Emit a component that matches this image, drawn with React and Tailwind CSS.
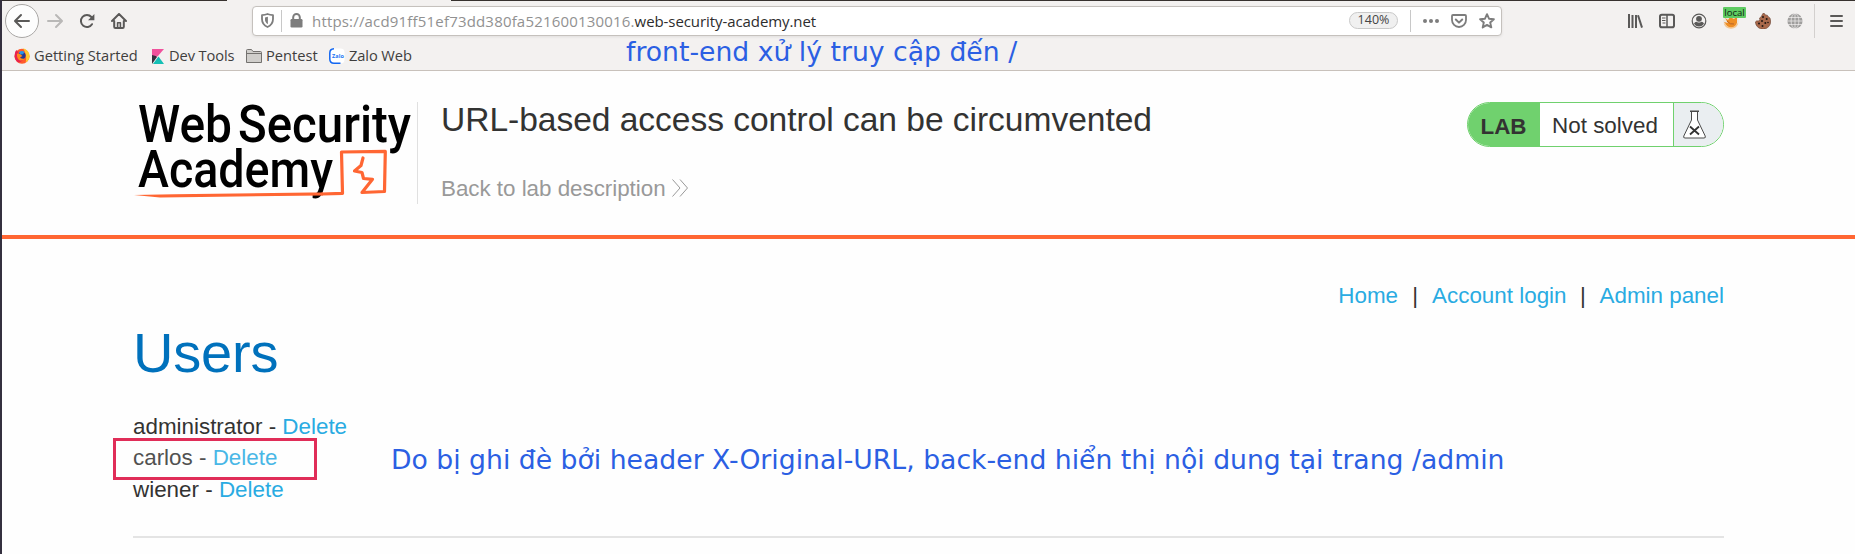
import React from "react";

const ui = "font-['Open_Sans',sans-serif] whitespace-nowrap";

function Toolbar() {
  return (
    <div className="flex h-[42px] items-center">
      <div className="ml-[3px] flex size-[34px] shrink-0 items-center justify-center rounded-full border border-[#a9a7a5] bg-[#fdfdfd]">
        <svg width="18" height="18" viewBox="0 0 18 18" fill="none" stroke="#5a5958" strokeWidth="2" strokeLinecap="round" strokeLinejoin="round">
          <path d="M16 9H2.5M8 3L2 9l6 6" />
        </svg>
      </div>
      <svg className="ml-[7px] shrink-0" width="18" height="18" viewBox="0 0 18 18" fill="none" stroke="#b9b8b7" strokeWidth="2" strokeLinecap="round" strokeLinejoin="round">
        <path d="M2 9h13.5M10 3l6 6-6 6" />
      </svg>
      <svg className="ml-[15px] shrink-0" width="16" height="16" viewBox="0 0 16 16" fill="none" stroke="#5a5958" strokeWidth="2">
        <path d="M13 11.2A6 6 0 1 1 12.4 4" strokeLinecap="round" />
        <path d="M15.4 1v6.3H9z" fill="#5a5958" stroke="none" />
      </svg>
      <svg className="ml-[16px] shrink-0" width="16" height="16" viewBox="0 0 16 16" fill="none" stroke="#5a5958" strokeWidth="2" strokeLinecap="round" strokeLinejoin="round">
        <path d="M1 8l7-7 7 7M3.2 8v5.8q0 1.200 1.200 1.200h7.200q1.200 0 1.200-1.200V8" />
        <path d="M6.600 14.500V9.800h2.800v4.700" strokeWidth="1.600" />
      </svg>
      <div className="mt-[-1px] ml-[125px] flex h-[30px] w-[1250px] shrink-0 items-center rounded-[4px] border border-[#c5c1bd] bg-white shadow-[0_1px_3px_rgba(0,0,0,0.08)]">
        <svg className="ml-[8px] shrink-0" width="13" height="15" viewBox="0 0 13 15" fill="none" stroke="#7d7d7d" strokeWidth="1.8">
          <path d="M1 2.2Q4 2 6.5 1 9 2 12 2.2V6c0 4-2 6.500-5.500 8C3 12.500 1 10 1 6z" strokeLinejoin="round" />
          <path d="M6.900 3.800v7.400C4.800 9.800 4 8.500 4 6.500V4.500z" fill="#7d7d7d" stroke="none" />
        </svg>
        <div className="ml-[7px] h-[22px] w-px bg-[#c8c8c8]" />
        <svg className="ml-[8px] shrink-0" width="13" height="15" viewBox="0 0 13 15">
          <path d="M3.200 7V4.300a3.300 3.300 0 0 1 6.600 0V7" fill="none" stroke="#7d7d7d" strokeWidth="2" />
          <rect x="0.500" y="6" width="12" height="8.500" rx="1.200" fill="#7d7d7d" />
        </svg>
        <div className={`${ui} ml-[9px] w-[1037px] text-[15px] leading-[20px] text-[#919191]`}>
          <span className="tracking-[0.18px]">https://acd91ff51ef73dd380fa521600130016.</span>
          <span className="tracking-[-0.08px] text-[#2d2d2d]">web-security-academy.net</span>
        </div>
        <div className={`${ui} flex h-[17px] w-[49px] shrink-0 items-center justify-center rounded-full border border-[#c9c9c9] bg-[#f0f0f0] text-[12.500px] text-[#444]`}>140%</div>
        <div className="ml-[12px] h-[22px] w-px bg-[#c8c8c8]" />
        <svg className="ml-[12px] shrink-0" width="16" height="4" viewBox="0 0 16 4" fill="#7d7d7d">
          <circle cx="2" cy="2" r="2" />
          <circle cx="8" cy="2" r="2" />
          <circle cx="14" cy="2" r="2" />
        </svg>
        <svg className="ml-[12px] shrink-0" width="16" height="16" viewBox="0 0 16 16" fill="none" stroke="#7d7d7d" strokeWidth="2" strokeLinecap="round" strokeLinejoin="round">
          <path d="M2 2h12q1 0 1 1v4a7 7 0 0 1-14 0V3q0-1 1-1z" strokeWidth="1.800" />
          <path d="M4.800 6.500L8 9.600l3.200-3.100" />
        </svg>
        <svg className="ml-[12px] shrink-0" width="16" height="16" viewBox="0 0 16 16" fill="none" stroke="#7d7d7d" strokeWidth="1.900" strokeLinejoin="round">
          <path d="M8 1.200l2 4.500 4.900.500-3.700 3.300 1.100 4.900L8 11.900l-4.300 2.500 1.100-4.900L1.100 6.200 6 5.700z" />
        </svg>
      </div>
      <div className="ml-[125px] flex items-center gap-[16px]">
        <svg width="16" height="16" viewBox="0 0 16 16" stroke="#5a5958" strokeWidth="2">
          <path d="M2 1v14M5.500 2v13M9 2v13" />
          <path d="M11 2.200L15 14.600" />
        </svg>
        <svg width="16" height="16" viewBox="0 0 16 16" fill="none" stroke="#5a5958">
          <rect x="1" y="1.800" width="14" height="12.400" rx="1.800" strokeWidth="2" />
          <path d="M8 2v12" strokeWidth="1.500" />
          <path d="M3 5h3.500M3 7.500h3.500M3.500 10h3" strokeWidth="1" />
        </svg>
        <svg width="16" height="16" viewBox="0 0 16 16">
          <circle cx="8" cy="8" r="6.800" fill="none" stroke="#5a5958" strokeWidth="1.200" />
          <circle cx="8" cy="5.800" r="2.900" fill="#5a5958" />
          <path d="M3 10.300Q5 8.600 6 8.900q2 1 4 0 1-.300 3 1.400A5.500 5.500 0 0 1 3 10.300z" fill="#5a5958" />
        </svg>
        <div className="relative size-[16px]">
          <svg width="16" height="16" viewBox="0 0 16 16">
            <circle cx="8" cy="8" r="7.800" fill="#eee7de" />
            <path d="M2 5l3 2 2-3 4 2 3-3v7a6 6 0 0 1-10 3L1 9l4 1z" fill="#ef8e25" />
            <path d="M4 8q3 4 7 3" stroke="#b7642a" fill="none" />
            <path d="M1.500 10.500a7 7 0 0 0 13 0" stroke="#f6c58e" fill="none" strokeWidth="1.500" />
          </svg>
          <div className={`${ui} absolute -top-[6px] left-0 flex h-[11px] w-[23px] items-center justify-center rounded-[1px] bg-[#5fcb62] text-[9.500px] leading-[11px] font-medium text-[#10240f]`}>local</div>
        </div>
        <svg width="16" height="16" viewBox="0 0 16 16">
          <path d="M8 .300l1.500.300 1 1.300 1.800.300 1.200 1.700L15 5l.700 3A7.700 7.700 0 1 1 .300 9l1.500-1.200 1.700.300 1.300-1.600-.300-1.500 1.500-1z" fill="#a9694b" stroke="#5a3526" strokeWidth=".500" />
          <g fill="#221713"><circle cx="8" cy="4" r="1" /><circle cx="11.700" cy="6" r="1" /><circle cx="7" cy="8" r="1" /><circle cx="10.300" cy="10" r="1" /><circle cx="4" cy="10.500" r="1" /><circle cx="7.500" cy="13" r="1" /><circle cx="13" cy="9.500" r=".800" /></g>
        </svg>
        <svg width="16" height="16" viewBox="0 0 16 16" fill="none" stroke="#f3f1f0" strokeWidth=".700">
          <circle cx="8" cy="8" r="7.600" fill="#9f9e9d" stroke="none" />
          <ellipse cx="8" cy="8" rx="3.900" ry="7.600" />
          <path d="M8 0v16M0 8h16M1 4.500h14M1 11.500h14" />
        </svg>
      </div>
      <div className="ml-[11px] h-[34px] w-px bg-[#d3d0ce]" />
      <svg className="ml-[14px] shrink-0" width="14" height="14" viewBox="0 0 14 14" stroke="#5a5958" strokeWidth="2" strokeLinecap="round">
        <path d="M2 2h11M2 7h11M2 12h11" />
      </svg>
    </div>
  );
}

function Bookmarks() {
  return (
    <div className={`${ui} flex h-[28px] items-center text-[14.670px] leading-[20px] text-[#3f3e3d]`}>
      <svg className="ml-[12px] shrink-0" width="16" height="16" viewBox="0 0 16 16">
        <circle cx="8" cy="8.300" r="7.500" fill="#ff5a2c" />
        <path d="M9 .300c4 1.200 6.500 4 6.600 7.700.100 3-2 5.500-4 6.500 1-3 1-9-2.600-14.200z" fill="#ffca2e" />
        <path d="M1 5q.200-2 1.500-3 .600 1.500 2 1.800L4 8q1 4 5 4a7 7 0 0 1-5 2.500Q-.500 11 1 5z" fill="#e8224e" />
        <circle cx="8" cy="7.600" r="3.600" fill="#27398f" />
        <path d="M5 4q3-2 5.500 0L9 6.200 6 6.500z" fill="#2795e9" />
        <path d="M3 5.500l3 .500L8.500 8 6 9.500q2 1.700 5.200 1-3 3-6.200 1.500Q2.500 9.500 3 5.500z" fill="#ff8a1c" />
      </svg>
      <span className="ml-[4px] w-[104px] pb-[2px]">Getting Started</span>
      <svg className="ml-[14px] shrink-0" width="12" height="15" viewBox="0 0 12 15">
        <path d="M0 0v15l5-7z" fill="#372e3d" />
        <path d="M0 0h12L5.500 7.500 0 6z" fill="#f0529c" />
        <path d="M6.500 7.500L12 15H1z" fill="#14bfb5" />
      </svg>
      <span className="ml-[5px] w-[66px] pb-[2px] tracking-[-0.1px]">Dev Tools</span>
      <svg className="ml-[11px] shrink-0" width="16" height="14" viewBox="0 0 16 14">
        <path d="M.500 13.500v-12q0-1 1-1h4l1.500 2h7.500q1 0 1 1v10z" fill="#d0cecb" stroke="#73716e" />
        <path d="M.500 4.500h15" stroke="#73716e" />
      </svg>
      <span className="ml-[4px] w-[52px] pb-[2px]">Pentest</span>
      <svg className="ml-[11px] shrink-0" width="16" height="16" viewBox="0 0 16 16">
        <rect x=".500" y=".500" width="15" height="15" rx="4" fill="#fff" />
        <path d="M5 .800Q.800 1 .800 5v6q0 4.200 4.200 4.200h6.500" fill="none" stroke="#1266f1" strokeWidth="1.500" />
        <text x="3" y="9.600" fontFamily="Open Sans, sans-serif" fontWeight="700" fontSize="5.500" fill="#1b74f3" textLength="12">Zalo</text>
      </svg>
      <span className="ml-[4px] pb-[2px] tracking-[-0.1px]">Zalo Web</span>
    </div>
  );
}

function Logo() {
  return (
    <svg width="284" height="124" viewBox="133 81 284 124" className="shrink-0 overflow-visible">
      <g fontFamily="Roboto, sans-serif" fontWeight="500" fontSize="52" fill="#000">
        <text x="138" y="142" textLength="94" lengthAdjust="spacingAndGlyphs">Web</text>
        <text x="238" y="142" textLength="173" lengthAdjust="spacingAndGlyphs">Security</text>
        <text x="138" y="187" textLength="195" lengthAdjust="spacingAndGlyphs">Academy</text>
      </g>
      <path d="M134 195l40-.800 137-1.700h12v3L200 197l-40 .500z" fill="#ff6633" />
      <path d="M322 194L342.500 193.300 341.500 152 385.300 151.400 384.500 191.500 362 192.500 372.500 179.300 363.500 178.500 362 172.500 354.500 171 361 165.500 363 158" fill="none" stroke="#ff6633" strokeWidth="3.200" strokeLinejoin="round" strokeLinecap="round" />
    </svg>
  );
}

function LabHeader() {
  return (
    <header className="flex h-[168px] items-start border-b-4 border-[#ff6633] pr-[131px] pl-[131px]">
      <div className="mt-[10px] w-[284px]"><Logo /></div>
      <div className="mt-[31px] h-[102px] w-px bg-[#e0e0e0]" />
      <div className="ml-[23px]">
        <h1 className="mt-[29px] text-[33.600px] leading-[40px] tracking-[-0.045px] whitespace-nowrap text-[#333332]">URL-based access control can be circumvented</h1>
        <div className="mt-[36px] flex items-center text-[22.400px] leading-[26px] text-[#999]">
          <span className="w-[225px] whitespace-nowrap tracking-[-0.03px]">Back to lab description</span>
          <svg className="ml-[6px] -mt-[2px]" width="16" height="18" viewBox="0 0 16 18" fill="none" stroke="#999" strokeWidth="1">
            <path d="M.500.500L8 9 .500 17.500M8 .500L15.500 9 8 17.500" />
          </svg>
        </div>
      </div>
      <div className="mt-[31px] ml-auto flex h-[45px] w-[257px] overflow-hidden rounded-full border border-[#70d16e] text-[22.400px] text-[#333332]">
        <div className="flex w-[72px] items-center justify-center bg-[#70d16e] pt-[4px] pr-[1px] font-bold">LAB</div>
        <div className="flex w-[133px] items-center justify-center bg-white pt-[2px] pr-[3px] whitespace-nowrap">Not solved</div>
        <div className="flex flex-1 items-center border-l border-[#70d16e] bg-[#eaeef1] pl-[9px]">
          <svg width="23" height="29" viewBox="0 0 23 29" fill="#fff" stroke="#4a4a4a" strokeWidth="1">
            <path d="M8.500 1.500V10L.800 26q-.800 2 1.200 2h19q2 0 1.200-2L14.500 10V1.500z" />
            <path d="M7 1.200h9" strokeWidth="1.600" />
            <path d="M7 16.500l9 8M16 16.500l-9 8" strokeWidth="1.800" stroke="#333" />
          </svg>
        </div>
      </div>
    </header>
  );
}

function UserRow({ name }) {
  return (
    <li className="h-[31.500px]">
      {name} - <a className="text-[#29abe2]">Delete</a>
    </li>
  );
}

export default function App() {
  return (
    <div className="relative flex h-[554px] w-[1855px] overflow-hidden bg-[#fefefe] font-['Liberation_Sans',Arial,sans-serif]">
      <div className="w-[2px] shrink-0 bg-[#34303f]" />
      <div className="w-[1853px]">
        <div className="relative h-[71px] border-b border-[#c8c1bb] bg-[#f3f1f0]">
          <div className="absolute inset-x-0 top-0 flex h-px">
            <div className="w-[225px] bg-[#37322f]" />
            <div className="w-[224px]" />
            <div className="flex-1 bg-[#37322f]" />
          </div>
          <Toolbar />
          <Bookmarks />
        </div>
        <LabHeader />
        <main className="pr-[131px] pl-[131px] text-[22.400px] leading-[31.500px] text-[#333332]">
          <nav className="flex justify-end pt-[41px] text-[#29abe2]">
            <a>Home</a>
            <span className="w-[34px] text-center text-[#333332]">|</span>
            <a>Account login</a>
            <span className="w-[33px] text-center text-[#333332]">|</span>
            <a>Admin panel</a>
          </nav>
          <h1 className="mt-[9px] text-[56px] leading-[64px] tracking-[-0.2px] text-[#0071bc]">Users</h1>
          <ul className="mt-[26px]">
            <UserRow name="administrator" />
            <UserRow name="carlos" />
            <UserRow name="wiener" />
          </ul>
          <div className="mt-[31px] h-[2px] bg-[#e4e4e4]" />
        </main>
      </div>
      <div className="absolute top-[438px] left-[113px] h-[42px] w-[204px] border-3 border-[#e02d58] bg-white/15" />
      <div className="absolute top-[36px] left-[626px] font-['DejaVu_Sans',sans-serif] text-[26.670px] leading-[32px] whitespace-nowrap text-[#2b5fe3]">front-end xử lý truy cập đến /</div>
      <div className="absolute top-[444px] left-[391px] font-['DejaVu_Sans',sans-serif] text-[26.670px] leading-[32px] whitespace-nowrap text-[#2b5fe3]">Do bị ghi đè bởi header X-Original-URL, back-end hiển thị nội dung tại trang /admin</div>
    </div>
  );
}
